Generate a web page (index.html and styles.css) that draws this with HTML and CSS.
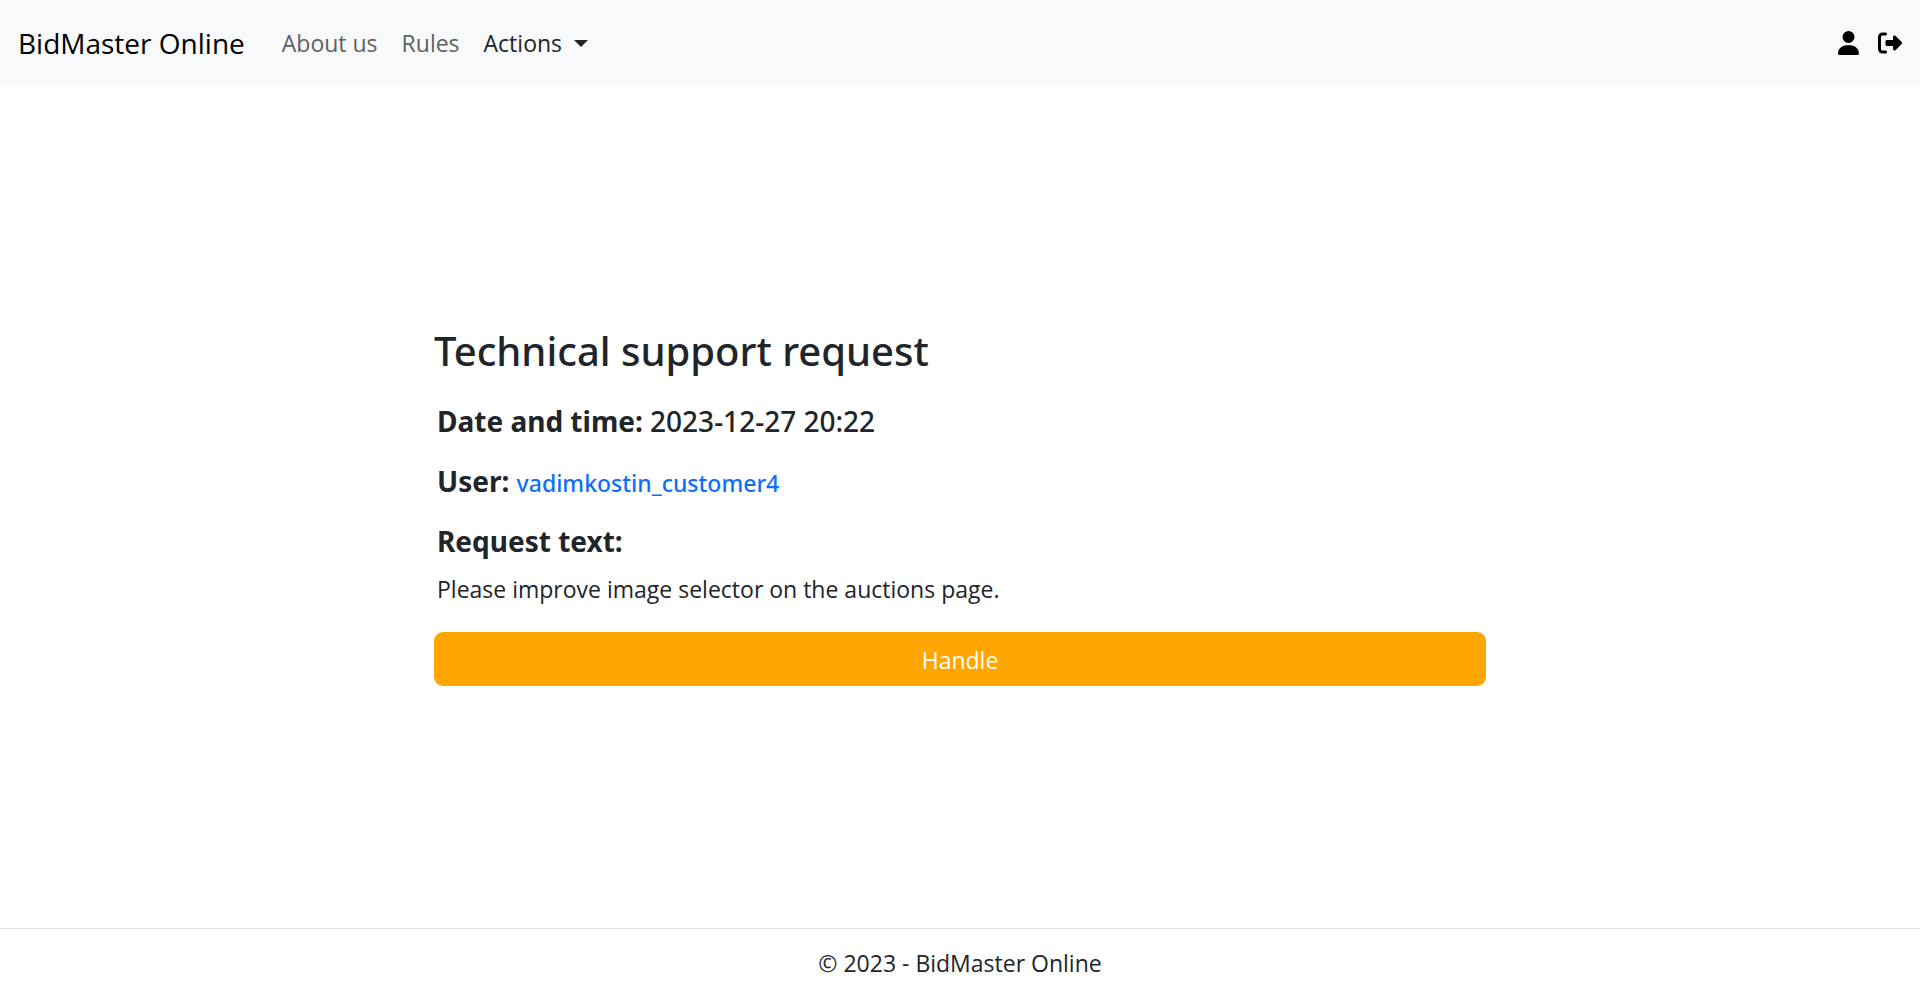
FILE: index.html
```html
<!DOCTYPE html>
<html lang="en">
<head>
  <meta charset="utf-8">
  <meta name="viewport" content="width=device-width, initial-scale=1">
  <title>Technical support request - BidMaster Online</title>
  <link rel="stylesheet" href="styles.css">
</head>
<body>
  <header class="navbar">
    <a class="brand" href="#">BidMaster Online</a>
    <nav class="nav">
      <a class="nav-link" href="#">About us</a>
      <a class="nav-link" href="#">Rules</a>
      <button class="nav-link nav-toggle" type="button" aria-haspopup="true">Actions<span class="caret"></span></button>
    </nav>
    <div class="account">
      <a class="icon-link" href="#" aria-label="Profile">
        <svg class="icon-user" viewBox="0 0 448 512" aria-hidden="true"><path d="M224 256A128 128 0 1 0 224 0a128 128 0 1 0 0 256zm-45.700 48C79.800 304 0 383.800 0 482.300C0 498.700 13.300 512 29.700 512H418.300c16.400 0 29.700-13.300 29.700-29.700C448 383.800 368.200 304 269.700 304H178.300z"/></svg>
      </a>
      <a class="icon-link" href="#" aria-label="Log out">
        <svg class="icon-exit" viewBox="0 0 512 512" aria-hidden="true"><path d="M377.900 105.900L500.700 228.700c7.200 7.200 11.300 17.100 11.300 27.300s-4.100 20.100-11.300 27.300L377.900 406.100c-6.400 6.400-15 9.900-24 9.900c-18.700 0-33.900-15.200-33.900-33.900l0-62.100-128 0c-17.700 0-32-14.300-32-32l0-64c0-17.700 14.300-32 32-32l128 0 0-62.100c0-18.700 15.200-33.900 33.900-33.900c9 0 17.600 3.600 24 9.900zM160 96L96 96c-17.700 0-32 14.300-32 32l0 256c0 17.700 14.300 32 32 32l64 0c17.700 0 32 14.300 32 32s-14.300 32-32 32l-64 0c-53 0-96-43-96-96L0 128C0 75 43 32 96 32l64 0c17.700 0 32 14.300 32 32s-14.300 32-32 32z"/></svg>
      </a>
    </div>
  </header>
  <main class="main">
    <section class="request">
      <h1 class="title">Technical support request</h1>
      <div class="details">
        <h2 class="field"><strong>Date and time:</strong> 2023-12-27 20:22</h2>
        <h2 class="field"><strong>User:</strong> <a class="user-link" href="#">vadimkostin_customer4</a></h2>
        <h2 class="field"><strong>Request text:</strong></h2>
        <p class="message">Please improve image selector on the auctions page.</p>
      </div>
      <button class="handle" type="button">Handle</button>
    </section>
  </main>
  <footer class="footer">© 2023 - BidMaster Online</footer>
</body>
</html>
```
FILE: styles.css
```css
* {
  box-sizing: border-box;
}

body {
  display: flex;
  flex-direction: column;
  min-height: 100vh;
  margin: 0;
  background: #fff;
  color: #212529;
  font-family: "Segoe UI", "Open Sans", "Noto Sans", sans-serif;
  font-size: 23px;
  line-height: 36px;
}

a {
  text-decoration: none;
}

.navbar {
  display: flex;
  align-items: center;
  min-height: 84px;
  padding: 13px 18px 11px;
  background: #f8f9fa;
}

.brand {
  margin-right: 25px;
  color: #000;
  font-size: 28px;
}

.nav {
  display: flex;
}

.nav-link {
  padding: 12px;
  border: 0;
  background: none;
  color: #5e6063;
  font: inherit;
}

.nav-toggle {
  display: flex;
  align-items: center;
  gap: 12px;
  color: #212529;
}

.caret {
  border: 7px solid transparent;
  border-top-color: currentColor;
  border-bottom: 0;
}

.account {
  display: flex;
  align-items: center;
  gap: 19px;
  margin-left: auto;
}

.icon-link {
  display: flex;
  color: #000;
}

.icon-user,
.icon-exit {
  height: 24px;
  fill: currentColor;
}

.main {
  display: flex;
  flex: 1;
  align-items: center;
  justify-content: center;
}

.request {
  width: 100%;
  max-width: 1052px;
}

.title {
  margin: 0 0 27px;
  font-family: "Segoe UI", "Noto Sans", sans-serif;
  font-size: 40px;
  font-weight: 500;
  line-height: 50px;
}

.details {
  padding: 0 3px;
}

.field {
  margin: 0 0 24px;
  font-family: "Segoe UI", "Noto Sans", sans-serif;
  font-size: 28px;
  font-weight: 500;
  line-height: 36px;
}

.field:last-of-type {
  margin-bottom: 12px;
}

.user-link {
  color: #0d6efd;
  font-size: 23px;
  line-height: 24px;
}

.message {
  margin: 0 0 25px;
}

.handle {
  width: 100%;
  padding: 10px 18px 8px;
  border: 0;
  border-radius: 9px;
  background: #ffa500;
  color: #fff;
  font: inherit;
}

.footer {
  padding: 16px 18px 13px;
  border-top: 1px solid #dee2e6;
  text-align: center;
}
```
